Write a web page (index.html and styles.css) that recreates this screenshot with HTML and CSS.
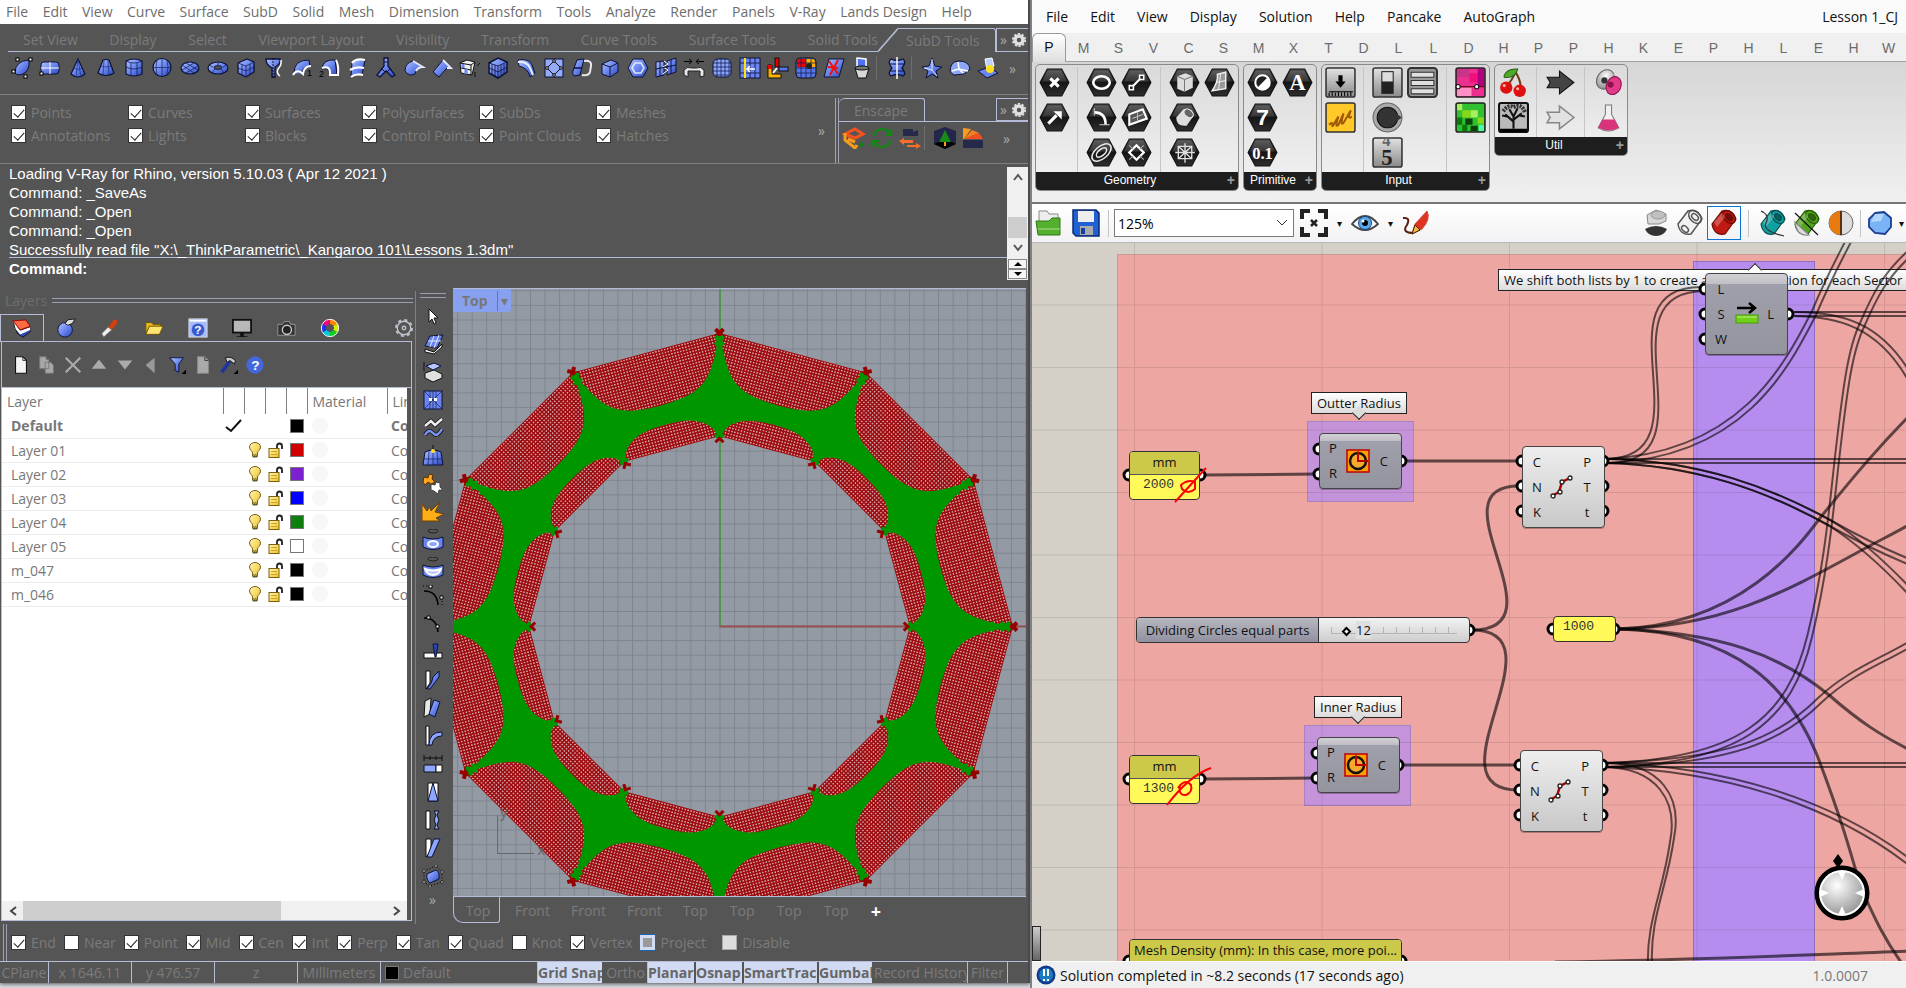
FILE: index.html
```html
<!DOCTYPE html>
<html lang="en">
<head>
  <meta charset="UTF-8" />
  <meta name="viewport" content="width=device-width, initial-scale=1" />
  <title>Lesson 1_CJ</title>
  <link rel="stylesheet" href="styles.css">
</head>
<body>
  <!-- shared gradients and symbols -->
  <svg class="defs" width="0" height="0" aria-hidden="true">
    <defs>
      <linearGradient id="blue" x1="0" y1="0" x2="1" y2="1"><stop offset="0" stop-color="#b4c4ff"/><stop offset=".5" stop-color="#6a86ee"/><stop offset="1" stop-color="#2c47b8"/></linearGradient>
      <linearGradient id="dark" x1="0" y1="0" x2="0" y2="1"><stop offset="0" stop-color="#4c4c4c"/><stop offset=".5" stop-color="#151515"/><stop offset="1" stop-color="#2e2e2e"/></linearGradient>
      <linearGradient id="steel" x1="0" y1="0" x2="0" y2="1"><stop offset="0" stop-color="#e2e2e2"/><stop offset="1" stop-color="#8a8a8a"/></linearGradient>
      <linearGradient id="gold" x1="0" y1="0" x2="1" y2="1"><stop offset="0" stop-color="#fff6b0"/><stop offset="1" stop-color="#f0c020"/></linearGradient>
      <radialGradient id="ball" cx=".4" cy=".35" r=".7"><stop offset="0" stop-color="#fff"/><stop offset="1" stop-color="#888"/></radialGradient>
      <pattern id="mesh" width="3" height="3" patternUnits="userSpaceOnUse" patternTransform="rotate(15)"><rect width="3" height="3" fill="#9c0c10"/><rect width="1.400" height="1.400" fill="#d8b0b2"/></pattern>
      <pattern id="grid" x="720" y="624" width="14.55" height="14.55" patternUnits="userSpaceOnUse"><path d="M.5 0V15M0 .5H15" stroke="#7f858e" fill="none"/></pattern>
    </defs>
    <symbol id="hex" viewBox="0 0 30 28"><path d="M8 1H22L29 14L22 27H8L1 14Z" fill="url(#dark)" stroke="#111"/><path d="M8.500 2.500H21.500L27 13H3Z" fill="#fff" opacity=".12"/></symbol>
    <symbol id="bulb" viewBox="0 0 14 17"><path d="M4.500 11C4.500 9 1.500 8 1.500 5a5.500 4.500 0 0 1 11 0c0 3-3 4-3 6v3.500h-5z" fill="url(#gold)" stroke="#806020"/><path d="M5 13h4M5 15h4" stroke="#555"/></symbol>
    <symbol id="lock" viewBox="0 0 16 17"><path d="M9 7V4q0-2.500 2.500-2.500T14 4v3" fill="none" stroke="#222" stroke-width="1.800"/><rect x="1" y="6.500" width="10" height="9" fill="url(#gold)" stroke="#776010"/><path d="M3 9.500h6M3 12.500h6" stroke="#c8a818"/></symbol>
    <symbol id="gear" viewBox="0 0 18 18"><circle cx="9" cy="9" r="4.500" fill="none" stroke="#e0e0e0" stroke-width="4"/><circle cx="9" cy="9" r="7" fill="none" stroke="#e0e0e0" stroke-width="2" stroke-dasharray="2.500 1.900"/></symbol>
    <symbol id="clock" viewBox="0 0 24 24"><rect x="1" y="1" width="22" height="22" fill="#ffa000" stroke="#c00000" stroke-width="1.500"/><circle cx="12" cy="12" r="8" fill="#f6a92a" stroke="#111" stroke-width="2.500"/><path d="M12 2.500V12H22" stroke="#b00" stroke-width="2" fill="none"/></symbol>
    <symbol id="divide" viewBox="0 0 24 24"><path d="M2 21L9 17L12 7L20 3" stroke="#a00" stroke-width="2.500" fill="none"/><g fill="#fff" stroke="#222" stroke-width="1.300"><circle cx="3" cy="21" r="2"/><circle cx="10" cy="17" r="2"/><circle cx="12" cy="7" r="2"/><circle cx="20" cy="3" r="2"/></g></symbol>
    <symbol id="tube" viewBox="0 0 28 28"><path d="M2 15L12 2Q22-1 26 10L15 25Q4 27 2 15Z"/><ellipse cx="19" cy="8" rx="7.500" ry="5" transform="rotate(45 19 8)"/><ellipse cx="19" cy="8" rx="4" ry="2.500" transform="rotate(45 19 8)" fill="#000" fill-opacity=".4"/><path d="M4 13L12 4L15 8L7 18Z" fill="#fff" fill-opacity=".25" stroke="none"/></symbol>
    <symbol id="tube-lines" viewBox="0 0 28 28"><path d="M2 15L12 2Q22-1 26 10L15 25Q4 27 2 15Z"/><ellipse cx="19" cy="8" rx="7.500" ry="5" transform="rotate(45 19 8)" fill="none"/><ellipse cx="19" cy="8" rx="4" ry="2.500" transform="rotate(45 19 8)" fill="none"/><ellipse cx="9" cy="20" rx="4" ry="2.500" transform="rotate(45 9 20)" fill="none"/></symbol>
    <symbol id="sheet" viewBox="0 0 22 22"><path d="M5 2h8l4 4v14H5z" stroke-width="1.200"/><path d="M13 2v4h4" fill="none" stroke="#333"/></symbol>
  </svg>

  <main class="desktop">
    <section class="rhino">
      <nav class="menu">
        <a href="#">File</a><a href="#">Edit</a><a href="#">View</a><a href="#">Curve</a><a href="#">Surface</a><a href="#">SubD</a><a href="#">Solid</a><a href="#">Mesh</a><a href="#">Dimension</a><a href="#">Transform</a><a href="#">Tools</a><a href="#">Analyze</a><a href="#">Render</a><a href="#">Panels</a><a href="#">V-Ray</a><a href="#">Lands Design</a><a href="#">Help</a>
      </nav>

      <div class="toolbars">
        <div class="tabstrip">
          <div class="tabs"><a href="#">Set View</a><a href="#">Display</a><a href="#">Select</a><a href="#">Viewport Layout</a><a href="#">Visibility</a><a href="#">Transform</a><a href="#">Curve Tools</a><a href="#">Surface Tools</a><a href="#">Solid Tools</a></div>
          <a class="tab-on" href="#"><svg width="20" height="24" viewBox="0 0 20 24"><path d="M0 23.500L20 .5" stroke="#b4bcd8" stroke-width="1.500"/></svg><span>SubD Tools</span></a>
          <div class="tab-end"><span>»</span><svg width="16" height="16"><use href="#gear"/></svg></div>
        </div>
        <div class="icons">
          <svg viewBox="0 0 22 22"><path d="M4 16Q4 4 18 3Q19 14 12 17Q6 19 4 16Z" fill="url(#blue)" stroke="#0c1238"/><g fill="#fff" stroke="#000"><rect x="5" y="1" width="3" height="3"/><rect x="18" y="1" width="3" height="3"/><rect x="1" y="13" width="3" height="3"/><rect x="13" y="18" width="3" height="3"/></g></svg>
          <svg viewBox="0 0 22 22"><rect x="2" y="5" width="18" height="12" rx="3" fill="url(#blue)" stroke="#0c1238"/><path d="M11 5v12M2 11h18" stroke="#fff"/><rect x="1" y="15" width="3" height="3" fill="#fff" stroke="#000"/></svg>
          <svg viewBox="0 0 22 22"><path d="M11 2L18 17Q11 23 4 17Z" fill="url(#blue)" stroke="#0c1238" stroke-width="1.200"/><path d="M11 2L9 20M11 2L14 20M7 11Q11 14 15 11" stroke="#1a2b78" fill="none" stroke-width=".7"/></svg>
          <svg viewBox="0 0 22 22"><path d="M8 3Q11 2 14 3L19 16Q11 21 3 16Z" fill="url(#blue)" stroke="#0c1238" stroke-width="1.200"/><path d="M6 9Q11 11 16 9M9 3L8 18M13 3L14 18" stroke="#1a2b78" fill="none" stroke-width=".7"/></svg>
          <svg viewBox="0 0 22 22"><path d="M3 4Q11 0 19 4V17Q11 21 3 17Z" fill="url(#blue)" stroke="#0c1238" stroke-width="1.200"/><path d="M3 4Q11 8 19 4M3 10Q11 14 19 10M8 6v13M14 6v13" stroke="#15205c" fill="none" stroke-width=".8"/></svg>
          <svg viewBox="0 0 22 22"><circle cx="11" cy="10.500" r="9" fill="url(#blue)" stroke="#0c1238" stroke-width="1.200"/><path d="M2 10.500H20M11 2V19M6 3Q4 10 6 18M16 3Q18 10 16 18" stroke="#15205c" fill="none" stroke-width=".7"/></svg>
          <svg viewBox="0 0 22 22"><ellipse cx="11" cy="11" rx="9" ry="6" fill="url(#blue)" stroke="#0c1238" stroke-width="1.200"/><path d="M3 8L15 16M7 6L19 13M3 13L15 6M7 16L19 9" stroke="#15205c" stroke-width=".8"/></svg>
          <svg viewBox="0 0 22 22"><ellipse cx="11" cy="11" rx="10" ry="6" fill="url(#blue)" stroke="#0c1238" stroke-width="1.200"/><ellipse cx="11" cy="10.500" rx="4" ry="1.800" fill="#555" stroke="#0c1238"/><path d="M2 8l4 2M11 5v3M20 8l-4 2M5 16l3-4M17 16l-3-4" stroke="#15205c" stroke-width=".8"/></svg>
          <svg viewBox="0 0 22 22"><path d="M3 6L12 2L19 5V15L11 20L3 16Z" fill="url(#blue)" stroke="#0c1238" stroke-width="1.300" stroke-linejoin="round"/><path d="M3 6L11 9L19 5M11 9V20M3 11L11 14L19 10M7 7.500V18M15 7V17" stroke="#15205c" fill="none" stroke-width=".8"/></svg>
          <svg viewBox="0 0 22 22"><path d="M3 2H17Q18 7 12 10V20H9V11Q3 8 3 2Z" fill="url(#blue)" stroke="#0c1238" stroke-width="1.300"/><path d="M18 3Q19 8 15 12Q13 16 17 19" fill="none" stroke="#fff" stroke-width="1.500"/><path d="M10 1V21" stroke="#111" stroke-dasharray="2 1"/></svg>
          <svg viewBox="0 0 22 22"><path d="M3 16Q3 3 18 3L19 10Q11 9 11 17" fill="url(#blue)" stroke="#0c1238"/><path d="M2 18Q6 11 12 17Q13 9 20 9" fill="none" stroke="#fff" stroke-width="2"/><text x="16" y="19" font-size="9">1</text></svg>
          <svg viewBox="0 0 22 22"><path d="M3 12Q4 2 16 3L18 18H11Q12 10 3 12Z" fill="url(#blue)" stroke="#0c1238"/><path d="M3 11Q12 8 11 18H19Q20 8 17 3" fill="none" stroke="#fff" stroke-width="2"/><text x="0" y="20" font-size="9">2</text></svg>
          <svg viewBox="0 0 22 22"><path d="M5 6Q9 1 18 3L15 18Q8 16 4 20Z" fill="url(#blue)" stroke="#0c1238"/><path d="M5 6Q9 1 18 3M3 13Q9 9 17 11M4 20Q9 16 16 18" fill="none" stroke="#fff" stroke-width="2.200"/></svg>
          <svg viewBox="0 0 22 22"><path d="M9 1H13V9L20 18L17 20L11 14L5 20L2 18L9 9Z" fill="url(#blue)" stroke="#0c1238" stroke-width="1.300"/><path d="M9 5h4M7 12l3 3M15 12l-3 3" stroke="#0c1238"/></svg>
          <svg viewBox="0 0 22 22"><path d="M2 14Q2 6 10 4L20 10Q13 11 12 17Q6 20 2 14Z" fill="url(#blue)" stroke="#0c1238"/><path d="M10 4L20 10Q15 10 13 14" fill="none" stroke="#e6ecff" stroke-width="1.800"/></svg>
          <svg viewBox="0 0 22 22"><path d="M2 15L12 3L20 11H16L8 20Z" fill="url(#blue)" stroke="#0c1238"/><path d="M12 3L20 11H16" fill="none" stroke="#e6ecff" stroke-width="1.800"/></svg>
          <svg viewBox="0 0 22 22"><path d="M1 6L8 3L16 5L13 18L2 16Z" fill="#eee" stroke="#111"/><path d="M1 6L12 8L16 5M12 8V18M2 11L12 13" stroke="#111" fill="none"/><path d="M4 7v4M7 12v5" stroke="#6a86ee" stroke-width="3"/><path d="M16 15V20M18 9L21 6" stroke="#111"/></svg>
          <svg viewBox="0 0 22 22"><path d="M2 6L11 1L20 5V15L11 21L2 16Z" fill="url(#blue)" stroke="#0c1238" stroke-width="1.500"/><path d="M2 6L11 9L20 5M11 9V21M2 11L11 15L20 10M5 7V18M8 8V19M14 8V19M17 7V17" stroke="#0c1238" fill="none" stroke-width=".8"/></svg>
          <svg viewBox="0 0 22 22"><path d="M3 3Q14 1 17 8L20 16L15 20Q13 11 4 9Z" fill="url(#blue)" stroke="#0c1238"/><path d="M3 5Q12 4 15 11L18 18" fill="none" stroke="#e6ecff" stroke-width="2"/></svg>
          <svg viewBox="0 0 22 22"><rect x="2" y="2" width="18" height="18" fill="#94a9f8" stroke="#0c1238"/><path d="M11 4L18 11L11 18L4 11Z" fill="none" stroke="#111"/><g fill="#fff" stroke="#000"><circle cx="11" cy="4" r="1.300"/><circle cx="18" cy="11" r="1.300"/><circle cx="11" cy="18" r="1.300"/><circle cx="4" cy="11" r="1.300"/></g></svg>
          <svg viewBox="0 0 22 22"><path d="M6 3L13 2L9 18L3 19Q1 17 2 14Z" fill="url(#blue)" stroke="#0c1238"/><path d="M3 11h8" stroke="#0c1238" stroke-width="1.500"/><path d="M13 4Q21 3 20 9L19 15Q18 19 11 18" fill="none" stroke="#e8e8e8" stroke-width="2"/></svg>
          <svg viewBox="0 0 22 22"><path d="M3 7L12 3L19 6V15L11 20L3 17Z" fill="url(#blue)" stroke="#0c1238"/><path d="M3 7L11 10L19 6M11 10V20" stroke="#0c1238" fill="none"/></svg>
          <svg viewBox="0 0 22 22"><path d="M6 2H16L21 11L16 20H6L1 11Z" fill="url(#blue)" stroke="#0c1238"/><path d="M8 6H14L17 11L14 16H8L5 11Z" fill="none" stroke="#dfe7ff" stroke-width="1.500"/></svg>
          <svg viewBox="0 0 22 22"><path d="M1 5L9 4V18L1 20ZM12 4L21 1V15L12 18Z" fill="url(#blue)" stroke="#0c1238"/><path d="M9 4L13 7L8 10L13 13L8 17" fill="none" stroke="#fff"/><path d="M1 12L21 8M5 5V19M16 3V17" stroke="#0c1238"/></svg>
          <svg viewBox="0 0 22 22"><path d="M1 4.500H9M13 4.500H21M6 2l3 2.500L6 7M16 2l-3 2.500L16 7" stroke="#000" fill="none"/><path d="M1 13Q4 9 9 11H13Q18 9 21 13V19L17 20V14H5V20L1 18Z" fill="#e8e8e8" stroke="#222"/></svg>
          <svg viewBox="0 0 22 22"><rect x="2" y="2" width="18" height="18" rx="5" fill="#8ea6f8" stroke="#0c1238"/><path d="M6 2V20M10 2V20M14 2V20M18 4V18M2 6H20M2 10H20M2 14H20M4 18H18" stroke="#15205c" stroke-width=".8"/></svg>
          <svg viewBox="0 0 22 22"><rect x="1" y="1" width="20" height="20" fill="#6a86ee" stroke="#0c1238"/><path d="M11 1V21M16 1V21M1 6H21M1 16H21" stroke="#15205c"/><path d="M6 1V21" stroke="#ffe500" stroke-width="2"/><path d="M8 12H16M11 9L8 12L11 15" stroke="#fff" stroke-width="1.500" fill="none"/></svg>
          <svg viewBox="0 0 22 22"><rect x="8" y="1" width="4" height="9" fill="#e00000" stroke="#111"/><rect x="12" y="10" width="9" height="4" fill="#5676e4" stroke="#111"/><path d="M1 8H5V17H14V21H1Z" fill="#ffb000" stroke="#111"/><path d="M1 8h4v4H1z" fill="#e00"/><path d="M10 11L6 16" stroke="#fff" stroke-width="2"/></svg>
          <svg viewBox="0 0 22 22"><rect x="1" y="1" width="20" height="20" rx="4" fill="#5676e4" stroke="#111"/><path d="M2 5Q2 2 5 2H11V10H2Z" fill="#e00"/><path d="M11 2H17Q20 2 20 5V10H11Z" fill="#ffb000"/><path d="M6 1V21M11 1V21M16 1V21M1 6H21M1 11H21M1 16H21" stroke="#15205c" stroke-width=".8"/><circle cx="14" cy="9" r="3" fill="#222"/></svg>
          <svg viewBox="0 0 22 22"><path d="M6 2H21L16 20H1Z" fill="url(#blue)" stroke="#0c1238"/><path d="M6 4L15 17M15 3L7 18M5 10L15 11" stroke="#f01010" stroke-width="2"/></svg>
          <svg viewBox="0 0 22 22"><path d="M6 1L15 2V11H6Z" fill="#4d70f0" stroke="#fff" stroke-width="1.500"/><path d="M4 11H18L15 21H7Z" fill="#d8d8d8" stroke="#111"/><ellipse cx="11" cy="11" rx="7" ry="2" fill="#777" stroke="#111"/></svg>
          <i class="sep"></i>
          <svg viewBox="0 0 22 22"><path d="M5 2Q11 5 17 2Q21 5 16 11Q21 17 17 19Q11 16 5 19Q1 17 6 11Q1 5 5 2Z" fill="url(#blue)" stroke="#0c1238" stroke-width="1.300"/><path d="M4 7H18M4 14H18" stroke="#0c1238"/><path d="M11 0V22" stroke="#fff" stroke-width="1.500"/></svg>
          <i class="sep"></i>
          <svg viewBox="0 0 22 22"><path d="M11 1L14 9L21 10L15 14L17 21L11 17L5 21L7 14L1 10L8 9Z" fill="url(#blue)" stroke="#0c1238"/><path d="M11 2V13L16 19M11 13L3 11" stroke="#dfe7ff" fill="none"/></svg>
          <svg viewBox="0 0 22 22"><path d="M1 15Q1 4 10 4Q20 4 21 12L15 17L5 18Z" fill="#8ea6f6" stroke="#0c1238"/><path d="M3 14L10 12L19 14M10 12L9 5M10 12L14 16" stroke="#fff" stroke-width="1.500" fill="none"/></svg>
          <svg viewBox="0 0 22 22"><path d="M1 14L12 10L21 16L10 21Z" fill="#6a86ee" stroke="#0c1238"/><path d="M8 2L15 1L17 9L10 13Z" fill="#bcd0ff" stroke="#fff"/><circle cx="13" cy="12" r="4" fill="#ffe020"/></svg>
          <span class="more">»</span>
        </div>
      </div>

      <div class="filters">
        <form class="filter-grid">
          <label><input type="checkbox" checked>Points</label>
          <label><input type="checkbox" checked>Curves</label>
          <label><input type="checkbox" checked>Surfaces</label>
          <label><input type="checkbox" checked>Polysurfaces</label>
          <label><input type="checkbox" checked>SubDs</label>
          <label><input type="checkbox" checked>Meshes</label>
          <label><input type="checkbox" checked>Annotations</label>
          <label><input type="checkbox" checked>Lights</label>
          <label><input type="checkbox" checked>Blocks</label>
          <label><input type="checkbox" checked>Control Points</label>
          <label><input type="checkbox" checked>Point Clouds</label>
          <label><input type="checkbox" checked>Hatches</label>
        </form>
        <span class="more">»</span>
        <div class="enscape">
          <div class="enscape-tabs"><a href="#">Enscape</a><div class="tab-end"><span>»</span><svg width="16" height="16"><use href="#gear"/></svg></div></div>
          <div class="enscape-icons">
            <svg viewBox="0 0 22 22"><path d="M2 7L12 2L20 7L12 11Z" fill="none" stroke="#f4511e" stroke-width="3"/><path d="M2 6V13L12 21L14 18M5 12L12 15" fill="none" stroke="#f99b1c" stroke-width="3"/><path d="M16 14L22 18L16 21Z" fill="#108010"/></svg>
            <svg viewBox="0 0 22 22"><path d="M2 9Q5 2 11 2Q16 2 19 7M20 2V8H14M20 13Q17 20 11 20Q6 20 3 15M2 20V14H8" fill="none" stroke="#108a10" stroke-width="2.200"/></svg>
            <svg viewBox="0 0 22 22"><path d="M4 2H14V5L19 3V9H4Z" fill="#262a4a"/><path d="M0 14L5 11V13H14V16H5V18ZM22 19L17 16V18H8V20H17V22Z" fill="#f4702a"/></svg>
            <i class="sep"></i>
            <svg viewBox="0 0 22 22"><path d="M0 4L11 0L22 4V17L11 22L0 17Z" fill="#22264a"/><path d="M0 17L11 12L22 17L11 22Z" fill="#000"/><path d="M11 3L17 15H5Z" fill="#188a18"/><path d="M11 15V19" stroke="#f99b1c" stroke-width="2"/></svg>
            <svg viewBox="0 0 22 22"><rect x="1" y="13" width="20" height="8" rx="1" fill="#262a4a"/><path d="M1 1L9 2L2 12H1Z" fill="#f99b1c"/><path d="M2 12L10 3L17 6Z" fill="#f47f20"/><path d="M2 12L17 6L21 12Z" fill="#f4511e"/></svg>
            <span class="more">»</span>
          </div>
        </div>
      </div>

      <div class="command">
        <div class="history">
          <p>Loading V-Ray for Rhino, version 5.10.03 ( Apr 12 2021 )</p>
          <p>Command: _SaveAs</p>
          <p>Command: _Open</p>
          <p>Command: _Open</p>
          <p>Successfully read file "X:\_ThinkParametric\_Kangaroo 101\Lessons 1.3dm"</p>
        </div>
        <div class="vscroll"><button aria-label="Scroll up"><svg width="12" height="8"><path d="M2 7L6 2L10 7" stroke="#555" stroke-width="2" fill="none"/></svg></button><i></i><button aria-label="Scroll down"><svg width="12" height="8"><path d="M2 1L6 6L10 1" stroke="#555" stroke-width="2" fill="none"/></svg></button></div>
        <label class="prompt" for="cmd">Command:</label>
        <input id="cmd" type="text">
        <div class="spin"><button aria-label="Previous"><svg width="8" height="4"><path d="M0 4L4 0L8 4"/></svg></button><button aria-label="Next"><svg width="8" height="4"><path d="M0 0L4 4L8 0"/></svg></button></div>
      </div>

      <div class="work">
        <aside class="layers">
          <h2><span>Layers</span></h2>
          <div class="panel-tabs">
            <a class="on" href="#"><svg viewBox="0 0 22 22"><path d="M2 6L6 16L12 20L20 14V9L10 12Z" fill="#2a4cc0" stroke="#111"/><path d="M2 3L9 13L20 9V12L9 17L4 11Z" fill="#fff"/><path d="M1 2L15 1L20 8L9 12Z" fill="#ff6a40" stroke="#900"/></svg></a>
            <a href="#"><svg viewBox="0 0 22 22"><circle cx="10" cy="13" r="8" fill="url(#blue)" stroke="#0c1238"/><path d="M10 6L13 2L21 1L18 6L13 8Z" fill="#ddd" stroke="#111"/></svg></a>
            <a href="#"><svg viewBox="0 0 22 22"><path d="M4 21L2 17L9 10L13 13Z" fill="#eee" stroke="#777"/><path d="M9 10L15 2H19V6L13 13Z" fill="#d04010"/></svg></a>
            <a href="#"><svg viewBox="0 0 22 22"><path d="M2 5H8L10 7H18V10H6L2 17Z" fill="#e8b820" stroke="#6a5000"/><path d="M2 18L6 9H21L17 18Z" fill="#ffe470" stroke="#6a5000"/></svg></a>
            <a href="#"><svg viewBox="0 0 22 22"><rect x="1" y="1" width="20" height="20" fill="#a8bcfa" stroke="#ddd"/><path d="M2 3H20" stroke="#fff" stroke-width="2"/><circle cx="11" cy="13" r="7" fill="#3a5ad0"/><text x="7" y="18" font-size="13" font-weight="bold" fill="#fff">?</text></svg></a>
            <a href="#"><svg viewBox="0 0 22 22"><rect x="1" y="2" width="20" height="14" fill="#b8b8b8" stroke="#111" stroke-width="2"/><path d="M9 16H13V20H17V21H5V20H9Z" fill="#111"/></svg></a>
            <a href="#"><svg viewBox="0 0 22 22"><path d="M2 7H7L9 4H15L16 7H21V19H2Z" fill="#333" stroke="#999"/><circle cx="12" cy="13" r="5" fill="#222" stroke="#ccc" stroke-width="1.500"/></svg></a>
            <a href="#"><svg viewBox="0 0 22 22"><g fill="none" stroke-width="5"><path d="M11 4A7 7 0 0 1 17 7.500" stroke="#f80"/><path d="M17 7.500A7 7 0 0 1 17 14.500" stroke="#d8f000"/><path d="M17 14.500A7 7 0 0 1 11 18" stroke="#10d020"/><path d="M11 18A7 7 0 0 1 5 14.500" stroke="#00c8e0"/><path d="M5 14.500A7 7 0 0 1 5 7.500" stroke="#2030f0"/><path d="M5 7.500A7 7 0 0 1 11 4" stroke="#f00080"/></g><circle cx="11" cy="11" r="9.500" fill="none" stroke="#fff"/></svg></a>
            <svg class="panel-gear" viewBox="0 0 20 20"><circle cx="10" cy="10" r="7.500" fill="none" stroke="#c0c6d0" stroke-width="1.500"/><circle cx="10" cy="10" r="9" fill="none" stroke="#c0c6d0" stroke-width="2" stroke-dasharray="3.500 3.570"/><circle cx="10" cy="10" r="2" fill="none" stroke="#c0c6d0" stroke-width="1.500"/></svg>
          </div>
          <div class="panel-body">
            <div class="panel-tools">
              <svg viewBox="0 0 22 22" fill="#f4f4f4" stroke="#111"><use href="#sheet"/></svg>
              <svg viewBox="0 0 22 22"><path d="M3 2h7v3h3v10H3zM9 8h6l3 3v9H9z" fill="#a8a8a8" stroke="#777"/></svg>
              <svg viewBox="0 0 22 22"><path d="M3 3L19 19M19 3L3 19" stroke="#aaa" stroke-width="2.500"/></svg>
              <svg viewBox="0 0 22 22"><path d="M11 5L19 15H3Z" fill="#aaa"/></svg>
              <svg viewBox="0 0 22 22"><path d="M11 16L19 6H3Z" fill="#aaa"/></svg>
              <svg viewBox="0 0 22 22"><path d="M5 11L15 3V20Z" fill="#999"/></svg>
              <svg viewBox="0 0 22 22"><path d="M3 3H18L13 10V19L9 17V10Z" fill="url(#blue)" stroke="#0c1238"/><path d="M21 16v5h-5z"/></svg>
              <svg viewBox="0 0 22 22" fill="#aaa" stroke="#888"><use href="#sheet"/></svg>
              <svg viewBox="0 0 22 22"><path d="M12 7L3 19" stroke="#1c35a0" stroke-width="4"/><path d="M7 3Q13 1 18 6L17 10L12 6L9 8Z" fill="#ccc" stroke="#111"/><path d="M21 16v5h-5z"/></svg>
              <svg viewBox="0 0 22 22"><circle cx="11" cy="11" r="9.500" fill="#4468dc"/><text x="7" y="17" font-size="15" font-weight="bold" fill="#fff">?</text></svg>
            </div>
            <div class="list">
            <table>
              <thead><tr><th class="name">Layer</th><th></th><th></th><th></th><th></th><th class="mat">Material</th><th class="lin">Lin</th></tr></thead>
              <tbody>
                <tr class="current"><td>Default</td><td><svg width="17" height="14"><path d="M1 8L6 12L16 1" fill="none" stroke="#111" stroke-width="2"/></svg></td><td></td><td></td><td><i class="sw black"></i></td><td><i class="dot"></i></td><td>Co</td></tr>
                <tr><td>Layer 01</td><td></td><td><svg width="14" height="17"><use href="#bulb"/></svg></td><td><svg width="16" height="17"><use href="#lock"/></svg></td><td><i class="sw red"></i></td><td><i class="dot"></i></td><td>Co</td></tr>
                <tr><td>Layer 02</td><td></td><td><svg width="14" height="17"><use href="#bulb"/></svg></td><td><svg width="16" height="17"><use href="#lock"/></svg></td><td><i class="sw purple"></i></td><td><i class="dot"></i></td><td>Co</td></tr>
                <tr><td>Layer 03</td><td></td><td><svg width="14" height="17"><use href="#bulb"/></svg></td><td><svg width="16" height="17"><use href="#lock"/></svg></td><td><i class="sw blue"></i></td><td><i class="dot"></i></td><td>Co</td></tr>
                <tr><td>Layer 04</td><td></td><td><svg width="14" height="17"><use href="#bulb"/></svg></td><td><svg width="16" height="17"><use href="#lock"/></svg></td><td><i class="sw green"></i></td><td><i class="dot"></i></td><td>Co</td></tr>
                <tr><td>Layer 05</td><td></td><td><svg width="14" height="17"><use href="#bulb"/></svg></td><td><svg width="16" height="17"><use href="#lock"/></svg></td><td><i class="sw"></i></td><td><i class="dot"></i></td><td>Co</td></tr>
                <tr><td>m_047</td><td></td><td><svg width="14" height="17"><use href="#bulb"/></svg></td><td><svg width="16" height="17"><use href="#lock"/></svg></td><td><i class="sw black"></i></td><td><i class="dot"></i></td><td>Co</td></tr>
                <tr><td>m_046</td><td></td><td><svg width="14" height="17"><use href="#bulb"/></svg></td><td><svg width="16" height="17"><use href="#lock"/></svg></td><td><i class="sw black"></i></td><td><i class="dot"></i></td><td>Co</td></tr>
              </tbody>
            </table>
            <div class="hscroll"><button aria-label="Scroll left"><svg width="8" height="12"><path d="M7 2L2 6L7 10" stroke="#444" stroke-width="2" fill="none"/></svg></button><div><i></i></div><button aria-label="Scroll right"><svg width="8" height="12"><path d="M1 2L6 6L1 10" stroke="#444" stroke-width="2" fill="none"/></svg></button></div>
            </div>
          </div>
        </aside>

        <div class="side-tools">
          <svg viewBox="0 0 22 22"><path d="M7 4V17L10 14L12 19L14 18L12 13H16Z" fill="#fff" stroke="#111"/></svg>
          <svg viewBox="0 0 22 22"><path d="M3 16L12 19L20 11V14L12 21L3 19Z" fill="#eee" stroke="#111"/><path d="M8 3L21 2L15 15L3 13Z" fill="#6a86ee" stroke="#0c1238"/><path d="M12 3L8 14M17 2L12 15M6 8L19 8" stroke="#dfe7ff"/></svg>
          <svg viewBox="0 0 22 22"><path d="M3 12L12 9L20 13V17L11 21L3 17Z" fill="#e0e0e0" stroke="#111"/><path d="M4 5L12 2L19 5L11 9Z" fill="#b8c8ff" stroke="#0c1238"/><path d="M2 1V10" stroke="#111"/></svg>
          <svg viewBox="0 0 22 22"><rect x="2" y="2" width="18" height="18" fill="#6a86ee" stroke="#0c1238"/><path d="M2 2L11 11L20 2M2 20L11 11L20 20M11 2V20M8 2V20M14 2V20" stroke="#15205c" stroke-width=".7" fill="none"/><path d="M7 9h3v3H7zM12 9h3v3h-3z" fill="#fff"/></svg>
          <svg viewBox="0 0 22 22" fill="none"><path d="M3 9L9 4L13 8L20 2" stroke="#111" stroke-width="4"/><path d="M3 9L9 4L13 8L20 2" stroke="#eee" stroke-width="2.500"/><path d="M3 18Q7 11 11 16T20 12" stroke="#111" stroke-width="4"/><path d="M3 18Q7 11 11 16T20 12" stroke="#7a94f4" stroke-width="2.500"/></svg>
          <svg viewBox="0 0 22 22"><path d="M3 7Q11 3 19 7L21 20H1Z" fill="url(#blue)" stroke="#0c1238"/><path d="M2 14H20M7 6L6 20M15 6L16 20M11 5V20" stroke="#15205c" stroke-width=".7"/><path d="M11 0V7" stroke="#111"/><circle cx="11" cy="6" r="2" fill="#ffe020"/></svg>
          <svg viewBox="0 0 22 22"><path d="M2 4L6 5L7 1L11 2L10 6L13 9L9 11L6 9L3 12L1 9Z" fill="#ffa51e" stroke="#5a3000"/><path d="M9 11L13 12L14 9L18 10L18 14L21 17L17 17L16 21L12 18L9 17Z" fill="#fff" stroke="#444"/></svg>
          <svg viewBox="0 0 22 22"><path d="M0 3L5 10L8 6L9 10L18 1L13 11L22 13L14 17L18 20H0Z" fill="#ffae18" stroke="#704000"/></svg>
          <svg viewBox="0 0 22 22"><ellipse cx="11" cy="2" rx="5" ry="2" fill="none" stroke="#222"/><path d="M1 8Q11 12 21 8V18Q11 23 1 18Z" fill="#6a86ee" stroke="#0c1238"/><ellipse cx="11" cy="15" rx="5" ry="3" fill="#8ea6ff" stroke="#fff" stroke-width="2"/></svg>
          <svg viewBox="0 0 22 22"><ellipse cx="11" cy="2" rx="5" ry="2" fill="none" stroke="#222"/><path d="M1 8Q11 12 21 8V18Q11 23 1 18Z" fill="#6a86ee" stroke="#0c1238"/><path d="M3 12Q11 15 19 12Q17 18 11 18T3 12Z" fill="#b8c8ff" stroke="#fff" stroke-width="2"/></svg>
          <svg viewBox="0 0 22 22"><path d="M2 6Q15 6 16 20" fill="none" stroke="#000" stroke-width="1.500"/><path d="M1 1H9M20 13V21" stroke="#000" stroke-dasharray="1 2"/><path d="M7 0h3v3H7zM18 11h3v3h-3z" fill="#fff" stroke="#000"/></svg>
          <svg viewBox="0 0 22 22"><path d="M2 5Q15 5 16 19" fill="none" stroke="#000" stroke-width="1.500"/><path d="M5 3h3v3H5zM14 12h3v3h-3z" fill="#fff" stroke="#000"/></svg>
          <svg viewBox="0 0 22 22"><rect x="2" y="12" width="18" height="5" fill="#fff" stroke="#111"/><path d="M11 3H16L14 16H13Z" fill="#2748b8" stroke="#0c1238"/></svg>
          <svg viewBox="0 0 22 22"><path d="M4 2H8V14L4 20Z" fill="#fff" stroke="#111"/><path d="M17 2V8L8 20H5Q11 13 11 8Z" fill="url(#blue)" stroke="#0c1238"/></svg>
          <svg viewBox="0 0 22 22"><path d="M3 4L9 1L8 17L2 20Z" fill="#e8e8e8" stroke="#111"/><path d="M12 3L18 5L13 20L7 17Z" fill="url(#blue)" stroke="#0c1238"/></svg>
          <svg viewBox="0 0 22 22"><path d="M4 1H7V20H4Z" fill="#fff" stroke="#111"/><path d="M7 20Q7 7 20 7V11Q11 11 10 20Z" fill="#8ea6ff" stroke="#0c1238"/></svg>
          <svg viewBox="0 0 22 22"><path d="M2 2V8M20 2V8M2 5H20M8 3V7M14 3V7" stroke="#111"/><path d="M2 12H14V19H2Z" fill="#8ea6ff" stroke="#111"/><path d="M14 12H20V19H14Z" fill="#fff" stroke="#111"/></svg>
          <svg viewBox="0 0 22 22"><path d="M6 2H16V20H6Z" fill="#fff" stroke="#111"/><path d="M11 2L16 20H6Z" fill="#8ea6ff" stroke="#0c1238"/></svg>
          <svg viewBox="0 0 22 22"><path d="M4 2H8V20H4Z" fill="#fff" stroke="#111"/><path d="M12 2H17L15 6L17 11L15 16L17 20H12L14 16L12 11L14 6Z" fill="#8ea6ff" stroke="#111"/></svg>
          <svg viewBox="0 0 22 22"><path d="M4 2H9V14L4 20Z" fill="#fff" stroke="#111"/><path d="M12 2H18L10 20H5Z" fill="#8ea6ff" stroke="#0c1238"/></svg>
          <svg viewBox="0 0 22 22"><path d="M5 9L14 5Q18 7 17 14L8 18Q4 15 5 9Z" fill="url(#blue)" stroke="#0c1238"/><path d="M2 6L14 1L20 7V17L8 21L2 17Z" fill="none" stroke="#000" stroke-dasharray="1 2"/><path d="M1 5h2v2H1zM13 0h2v2h-2zM19 6h2v2h-2zM7 20h2v2H7zM1 16h2v2H1zM19 16h2v2h-2z" fill="#fff" stroke="#000" stroke-width=".6"/></svg>
          <span class="more">»</span>
        </div>

        <div class="view">
          <div class="viewport">
            <svg class="scene" viewBox="453 288 574 606" preserveAspectRatio="xMidYMid slice">
              <defs>
                <g id="sector">
                  <path d="M0-293L146.500-253.700L95-164.500L0-190Z" fill="url(#mesh)"/>
                  <path d="M0-293L3-275C6-262 9-253 13-246.700C22-232 38-226 59-220C80.300-214.700 97-212 112-220C118.700-223.600 125.800-229.800 135-239.600L146.500-253.700L95-164.500C95.400-173.500 92.100-183.600 79.500-192C72-197 64.300-199.200 54-202C44-204.600 36-206.600 27-206C12-205 4-198 0-190Z" fill="#009600" stroke="#009600"/>
                </g>
                <g id="marks" fill="none" stroke-width="4">
                  <path d="M-4-297L4-289M4-297L-4-289" stroke="#980000"/>
                  <path d="M-4-192L4-184M4-192L-4-184" stroke="#980000" stroke-width="3"/>
                  <path d="M-4-290L4-281M4-290L-4-281M-4-274L4-266M4-274L-4-266M0-290V-260M-4-197L4-189M4-197L-4-189" stroke="#009600"/>
                </g>
              </defs>
              <rect x="453" y="288" width="574" height="606" fill="#939aa3"/>
              <rect x="453" y="288" width="574" height="606" fill="url(#grid)"/>
              <path d="M720.500 288V625" stroke="#4d964d" stroke-width="2"/>
              <path d="M720 625H1027" stroke="#964d50" stroke-width="2"/>
              <g transform="translate(720 625)">
                <use href="#sector"/><use href="#sector" transform="rotate(30)"/><use href="#sector" transform="rotate(60)"/><use href="#sector" transform="rotate(90)"/><use href="#sector" transform="rotate(120)"/><use href="#sector" transform="rotate(150)"/><use href="#sector" transform="rotate(180)"/><use href="#sector" transform="rotate(210)"/><use href="#sector" transform="rotate(240)"/><use href="#sector" transform="rotate(270)"/><use href="#sector" transform="rotate(300)"/><use href="#sector" transform="rotate(330)"/>
                <use href="#marks"/><use href="#marks" transform="rotate(30)"/><use href="#marks" transform="rotate(60)"/><use href="#marks" transform="rotate(90)"/><use href="#marks" transform="rotate(120)"/><use href="#marks" transform="rotate(150)"/><use href="#marks" transform="rotate(180)"/><use href="#marks" transform="rotate(210)"/><use href="#marks" transform="rotate(240)"/><use href="#marks" transform="rotate(270)"/><use href="#marks" transform="rotate(300)"/><use href="#marks" transform="rotate(330)"/>
              </g>
              <path d="M498.500 814V851.500H535" fill="none" stroke="#666"/>
              <text x="501" y="815" class="axis">y</text><text x="538" y="853" class="axis">x</text>
            </svg>
            <button class="view-title"><b>Top</b><i>▾</i></button>
          </div>
          <nav class="view-tabs"><a class="on" href="#">Top</a><a href="#">Front</a><a href="#">Front</a><a href="#">Front</a><a href="#">Top</a><a href="#">Top</a><a href="#">Top</a><a href="#">Top</a><button aria-label="New viewport">+</button></nav>
        </div>
      </div>

      <form class="osnap">
        <label><input type="checkbox" checked>End</label>
        <label><input type="checkbox">Near</label>
        <label><input type="checkbox" checked>Point</label>
        <label><input type="checkbox" checked>Mid</label>
        <label><input type="checkbox" checked>Cen</label>
        <label><input type="checkbox" checked>Int</label>
        <label><input type="checkbox" checked>Perp</label>
        <label><input type="checkbox" checked>Tan</label>
        <label><input type="checkbox" checked>Quad</label>
        <label><input type="checkbox">Knot</label>
        <label><input type="checkbox" checked>Vertex</label>
        <label class="project"><input type="checkbox">Project</label>
        <label class="disable"><input type="checkbox">Disable</label>
      </form>

      <footer class="status">
        <span class="c1">CPlane</span><span class="c2">x 1646.11</span><span class="c2">y 476.57</span><span class="c2">z</span><span class="c2">Millimeters</span><span class="c3"><i class="sw black"></i>Default</span>
        <button class="on s1">Grid Snap</button><button class="s2">Ortho</button><button class="on s3">Planar</button><button class="on s3">Osnap</button><button class="on s4">SmartTrack</button><button class="on s5">Gumball</button><button class="s6">Record History</button><button class="s7">Filter</button>
      </footer>
    </section>

    <section class="gh">
      <nav class="gh-menu"><a href="#">File</a><a href="#">Edit</a><a href="#">View</a><a href="#">Display</a><a href="#">Solution</a><a href="#">Help</a><a href="#">Pancake</a><a href="#">AutoGraph</a><span>Lesson 1_CJ</span></nav>
      <nav class="gh-tabs"><a class="on" href="#">P</a><a href="#">M</a><a href="#">S</a><a href="#">V</a><a href="#">C</a><a href="#">S</a><a href="#">M</a><a href="#">X</a><a href="#">T</a><a href="#">D</a><a href="#">L</a><a href="#">L</a><a href="#">D</a><a href="#">H</a><a href="#">P</a><a href="#">P</a><a href="#">H</a><a href="#">K</a><a href="#">E</a><a href="#">P</a><a href="#">H</a><a href="#">L</a><a href="#">E</a><a href="#">H</a><a href="#">W</a></nav>

      <div class="ribbon">
        <div class="group">
          <div class="cells">
            <div class="col">
              <svg viewBox="0 0 30 28"><use href="#hex"/><path d="M11 10L19 18M19 10L11 18" stroke="#fff" stroke-width="3"/></svg>
              <svg viewBox="0 0 30 28"><use href="#hex"/><path d="M9 20L17 12" stroke="#fff" stroke-width="3"/><path d="M14 8H22V16Z" fill="#fff"/></svg>
            </div>
            <div class="col two">
              <svg viewBox="0 0 30 28"><use href="#hex"/><ellipse cx="15" cy="14" rx="8" ry="6" fill="none" stroke="#fff" stroke-width="2.500"/></svg>
              <svg viewBox="0 0 30 28"><use href="#hex"/><path d="M10 19L20 9" stroke="#fff" stroke-width="2"/><path d="M8 17h4v4H8zM18 7h4v4h-4z" fill="#222" stroke="#fff" stroke-width="1.500"/></svg>
              <svg viewBox="0 0 30 28"><use href="#hex"/><path d="M8 9Q19 9 19 21" fill="none" stroke="#fff" stroke-width="2.500"/><path d="M13 21H23M8 5V12" stroke="#ccc"/></svg>
              <svg viewBox="0 0 30 28"><use href="#hex"/><path d="M8 11L21 6L25 15L8 21Z" fill="#555" stroke="#fff" stroke-width="2"/><path d="M11 15L21 11M16 9V18" fill="none" stroke="#bbb"/></svg>
              <svg viewBox="0 0 30 28"><use href="#hex"/><g fill="none" stroke="#e8e8e8" stroke-width="1.500" transform="rotate(-40 15 14)"><ellipse cx="15" cy="14" rx="11" ry="6"/><ellipse cx="15" cy="14" rx="6" ry="3"/></g></svg>
              <svg viewBox="0 0 30 28"><use href="#hex"/><path d="M15 7L22 14L15 21L8 14Z" fill="none" stroke="#fff" stroke-width="2.200"/><path d="M8 7l4 4M22 7l-4 4M8 21l4-4M22 21l-4-4" stroke="#aaa"/></svg>
            </div>
            <div class="col two">
              <svg viewBox="0 0 30 28"><use href="#hex"/><path d="M8 8L16 5L23 8V19L15 23L8 20Z" fill="#ddd"/><path d="M8 8L15 11L23 8M15 11V23" stroke="#777" fill="none"/></svg>
              <svg viewBox="0 0 30 28"><use href="#hex"/><path d="M13 6L21 4V20L8 22Q14 13 13 6Z" fill="#999" stroke="#eee" stroke-width="1.500"/><path d="M12 14L21 12M16 6L14 21" stroke="#eee"/></svg>
              <svg viewBox="0 0 30 28"><use href="#hex"/><path d="M7 14L14 6Q22 4 24 12L17 22Q7 23 7 14Z" fill="#ddd"/><ellipse cx="19" cy="10" rx="5" ry="3.500" transform="rotate(40 19 10)" fill="#666" stroke="#eee"/></svg>
              <i></i>
              <svg viewBox="0 0 30 28"><use href="#hex"/><path d="M9 8H22V20H9ZM15.500 5V24M6 14H25M9 8L22 20M22 8L9 20" fill="none" stroke="#e0e0e0" stroke-width="1.300"/></svg>
            </div>
          </div>
          <footer>Geometry<b>+</b></footer>
        </div>
        <div class="group">
          <div class="cells">
            <div class="col two">
              <svg viewBox="0 0 30 28"><use href="#hex"/><circle cx="15" cy="14" r="7" fill="#222" stroke="#fff" stroke-width="2"/><path d="M20 9A7 7 0 0 1 10 19Z" fill="#fff"/></svg>
              <svg viewBox="0 0 30 28"><use href="#hex"/><text x="7" y="21" class="glyph">A</text></svg>
              <svg viewBox="0 0 30 28"><use href="#hex"/><text x="9" y="21" class="glyph sans">7</text></svg>
              <i></i>
              <svg viewBox="0 0 30 28"><use href="#hex"/><text x="5" y="20" class="glyph small">0.1</text></svg>
            </div>
          </div>
          <footer>Primitive<b>+</b></footer>
        </div>
        <div class="group">
          <div class="cells">
            <div class="col">
              <svg viewBox="0 0 30 30"><rect x="1" y="1" width="28" height="28" rx="2" fill="url(#steel)" stroke="#333" stroke-width="1.500"/><path d="M13 8H17V14H20L15 20L10 14H13Z"/><path d="M4 25V28M7 24V28M10 25V28M13 24V28M16 25V28M19 24V28M22 25V28M25 24V28M4 24H27"  stroke="#000"/></svg>
              <svg viewBox="0 0 30 30"><rect x="1" y="1" width="28" height="28" rx="2" fill="#ffc928" stroke="#333" stroke-width="1.500"/><path d="M4 22Q8 18 7 24L13 14Q9 26 13 22L18 11Q14 24 18 20L25 8Q21 18 26 14" fill="none" stroke="#a35a08" stroke-width="2"/></svg>
            </div>
            <div class="col two">
              <svg viewBox="0 0 30 30"><rect x="1" y="1" width="28" height="28" rx="2" fill="url(#steel)" stroke="#333" stroke-width="1.500"/><rect x="9" y="4" width="12" height="22" fill="#222"/><rect x="10" y="5" width="10" height="9" fill="#ddd"/></svg>
              <svg viewBox="0 0 30 30"><rect x="1" y="1" width="28" height="28" rx="3" fill="#999" stroke="#333" stroke-width="2"/><path d="M4 5h22v5H4zM4 13h22v5H4zM4 21h22v5H4z" fill="#e0e0e0" stroke="#333"/></svg>
              <svg viewBox="0 0 30 30"><circle cx="15" cy="15" r="14" fill="#aaa" stroke="#666"/><circle cx="15" cy="15" r="10" fill="#333" stroke="#111"/><path d="M23 11L29 15L23 19" fill="#333"/></svg>
              <i></i>
              <svg viewBox="0 0 30 30"><rect x="1" y="1" width="28" height="28" rx="2" fill="url(#steel)" stroke="#333" stroke-width="1.500"/><text x="10" y="9" class="glyph small dim">4</text><text x="9" y="27" class="glyph digit">5</text></svg>
            </div>
            <div class="col">
              <svg viewBox="0 0 30 30"><rect x="1" y="1" width="28" height="28" rx="2" fill="#ee2f92" stroke="#222" stroke-width="1.500"/><path d="M2 2h12v8H2z" fill="#c83488"/><path d="M14 6h10v9H14z" fill="#f0107a"/><path d="M22 2h6v17h-6z" fill="#b00080"/><path d="M2 20h14v8H2z" fill="#ff8fc4"/><path d="M2 19H28" stroke="#611"/><circle cx="3" cy="19" r="2" fill="#fff" stroke="#111"/><circle cx="21" cy="19" r="2" fill="#fff" stroke="#111"/></svg>
              <svg viewBox="0 0 30 30"><rect x="1" y="1" width="28" height="28" rx="2" fill="#30c030" stroke="#222" stroke-width="1.500"/><path d="M2 2h5v6H2zM15 8h7v7h-7z" fill="#a8f060"/><path d="M7 8h8v7H7zM22 15h6v6h-6z" fill="#88d818"/><path d="M2 15h5v7H2zM7 22h5v6H7z" fill="#087808"/><path d="M10 16h7v6h-7zM15 23h7v5h-7z" fill="#0c400c"/><path d="M23 22h5v6h-5z" fill="#50f8b0"/></svg>
            </div>
          </div>
          <footer>Input<b>+</b></footer>
        </div>
        <div class="group">
          <div class="cells short">
            <div class="col">
              <svg viewBox="0 0 30 30"><path d="M17 5Q14 12 9 18M17 5Q22 13 22 20" fill="none" stroke="#70401c" stroke-width="2"/><path d="M6 8Q9 1 19 2Q17 11 6 10Z" fill="#4cab28" stroke="#286410"/><circle cx="8" cy="20" r="6" fill="#e01010"/><circle cx="21" cy="23" r="6" fill="#e01010"/><circle cx="6" cy="18" r="1.500" fill="#ffb0a0"/><circle cx="19" cy="21" r="1.500" fill="#ffb0a0"/></svg>
              <svg viewBox="0 0 30 30"><rect x="1" y="1" width="28" height="28" rx="2" fill="#bbb" stroke="#111" stroke-width="2"/><path d="M2 26H28V29H2Z"/><path d="M15 26V14M15 19L7 12M15 17L23 11M15 14L11 7M15 14L19 6M9 14L4 13M21 13L26 14" stroke="#111" stroke-width="2"/><path d="M5 9q5-7 10-4q8-4 11 5" fill="none" stroke="#333" stroke-width="4" stroke-dasharray="2 1"/></svg>
            </div>
            <div class="col">
              <svg viewBox="0 0 30 30"><path d="M2 10H14V4L28 15L14 26V20H2L5 15Z" fill="#444" stroke="#111"/></svg>
              <svg viewBox="0 0 30 30"><path d="M2 10H14V4L28 15L14 26V20H2L5 15Z" fill="#e2e2e2" stroke="#888" stroke-width="1.500"/></svg>
            </div>
            <div class="col">
              <svg viewBox="0 0 30 30"><ellipse cx="12" cy="12" rx="8" ry="10" fill="url(#ball)" stroke="#666" transform="rotate(35 12 12)"/><ellipse cx="20" cy="18" rx="7" ry="9" fill="#e03a88" stroke="#901050" transform="rotate(25 20 18)"/><circle cx="11" cy="13" r="3" fill="#333"/><circle cx="17" cy="17" r="3" fill="#901050"/></svg>
              <svg viewBox="0 0 30 30"><path d="M12 3H18V12L25 25Q15 31 5 25L12 12Z" fill="#f0f0f0" stroke="#777"/><path d="M9 17H21L25 25Q15 30 5 25Z" fill="#d8347c"/></svg>
            </div>
          </div>
          <footer>Util<b>+</b></footer>
        </div>
      </div>

      <div class="gh-bar">
        <button aria-label="Open"><svg viewBox="0 0 28 28"><path d="M4 2H12L14 5H23V14H4Z" fill="#eee" stroke="#888"/><path d="M1 12H14L17 9H25V26H3Z" fill="#55b030" stroke="#2c7a10"/><path d="M3 20H25" stroke="#a8e088"/></svg></button>
        <button aria-label="Save"><svg viewBox="0 0 28 28"><path d="M2 1H24L27 4V27H4L1 24V1Z" fill="#1f60d4" stroke="#0c2a70" stroke-width="1.500"/><path d="M6 2H22V13H6Z" fill="#eee"/><path d="M8 17H21V26H8Z" fill="#aaa"/><path d="M9 19h4v6H9z" fill="#1040a0"/></svg></button>
        <i class="vsep"></i>
        <label class="zoom" aria-label="Zoom"><select><option>125%</option></select><svg width="12" height="8"><path d="M1 1L6 6L11 1" fill="none" stroke="#333"/></svg></label>
        <button aria-label="Zoom extents"><svg viewBox="0 0 28 28"><path d="M2 10V2H10M18 2H26V10M26 18V26H18M10 26H2V18" fill="none" stroke="#222" stroke-width="4"/><path d="M11 11L17 17M17 11L11 17" stroke="#222" stroke-width="2.500"/></svg></button><em>▾</em>
        <button aria-label="Preview"><svg viewBox="0 0 28 28"><path d="M1 15Q14-1 27 15Q14 27 1 15Z" fill="#f4f8ff" stroke="#444" stroke-width="1.800"/><circle cx="14" cy="14" r="6.500" fill="#5aa8ee" stroke="#18487c"/><circle cx="14" cy="14" r="3"/><circle cx="12" cy="12" r="1.500" fill="#fff"/></svg></button><em>▾</em>
        <button aria-label="Sketch"><svg viewBox="0 0 28 28"><path d="M1 9Q9 8 5 16Q-1 24 12 24" fill="none" stroke="#5a2010" stroke-width="2"/><path d="M10 25L13 15L25 2Q29 10 20 20Z" fill="#e23222" stroke="#c05040"/><path d="M10 25L13 16L18 21Z" fill="#f8b838" stroke="#442200"/></svg></button>
        <i class="grow"></i>
        <button aria-label="No preview"><svg viewBox="0 0 28 28"><path d="M5 6L14 1L24 5V12L17 15H6Z" fill="#d8d8d8" stroke="#888"/><ellipse cx="16" cy="6" rx="7" ry="4" fill="#c0c0c0" stroke="#999"/><path d="M3 20Q14 14 25 20Q22 27 14 27T3 20Z" fill="#333"/></svg></button>
        <button aria-label="Wireframe"><svg viewBox="0 0 28 28" fill="#f2f2f2" stroke="#555" stroke-width="1.500"><use href="#tube-lines"/></svg></button>
        <button class="active" aria-label="Shaded"><svg viewBox="0 0 28 28" fill="#c01a12" stroke="#6a0804" stroke-width="1.200"><use href="#tube"/></svg></button>
        <i class="vsep wide"></i>
        <button aria-label="Selected only"><svg viewBox="0 0 28 28" fill="#10a0a0" stroke="#064c50" stroke-width="1.200"><use href="#tube"/><path d="M2 2Q11 6 7 14T25 27" fill="none" stroke="#333"/></svg></button>
        <button aria-label="Clipping"><svg viewBox="0 0 28 28" fill="#55a51c" stroke="#265c08" stroke-width="1.200"><use href="#tube"/><path d="M2 13L16 26Q4 28 2 13Z" fill="#ddd" stroke="#888"/><path d="M2 4L25 26" stroke="#111"/></svg></button>
        <button aria-label="Colours"><svg viewBox="0 0 28 28"><circle cx="14" cy="14" r="12" fill="#ddd" stroke="#666"/><path d="M14 2A12 12 0 0 0 14 26Z" fill="#e87a10"/><path d="M14 2V26" stroke="#60300a" stroke-width="2"/></svg></button>
        <i class="vsep tight"></i>
        <button aria-label="Mesh quality"><svg viewBox="0 0 28 28"><path d="M9 4L18 3L25 9V18L19 25L9 24L3 18V10Z" fill="#7ab4f4" stroke="#1c3c90" stroke-width="1.800"/><path d="M9 5L18 5L15 12L5 13Z" fill="#cfe4ff" opacity=".7"/></svg></button><em>▾</em>
      </div>

      <div class="canvas">
        <div class="area pink"></div>
        <div class="area violet"></div>
        <div class="area lilac one"></div>
        <div class="area lilac two"></div>
        <svg class="layer"><defs><pattern id="cgrid" x="102" y="-1" width="187.500" height="62.500" patternUnits="userSpaceOnUse"><path d="M.5 0V63M0 .5H188" stroke="#000" stroke-opacity=".1" fill="none"/></pattern></defs><rect width="100%" height="100%" fill="url(#cgrid)"/></svg>
        <div class="tag down t1">Outter Radius</div>
        <div class="tag down t2">Inner Radius</div>
        <div class="tag up t3">We shift both lists by 1 to create a new connection for each Sector</div>

        <svg class="layer">
          <defs>
            <!-- list wires, drawn twice with a small offset -->
            <g id="rise">
              <path d="M1607 461C1715 461 1595 289 1703 289"/>
              <path d="M1607 461C1740 455 1785 370 1814 313C1830 275 1840 258 1852 234"/>
              <path d="M1607 461H1912"/>
              <path d="M1793 314H1912"/>
              <path d="M1604 765C1740 762 1790 720 1810 635C1828 560 1832 500 1838 450C1845 390 1850 350 1862 325C1875 295 1885 275 1912 251"/>
              <path d="M1604 765C1730 762 1780 740 1820 700C1850 672 1880 662 1912 643"/>
              <path d="M1604 765H1912"/>
            </g>
            <g id="fall">
              <path d="M1607 461C1700 463 1770 490 1830 523C1860 540 1885 552 1912 563"/>
              <path d="M1607 461C1700 463 1770 490 1830 523C1860 542 1885 565 1912 594"/>
              <path d="M1793 314C1840 314 1880 325 1910 378"/>
              <path d="M1604 765C1720 768 1830 800 1912 864"/>
              <path d="M1604 765C1660 765 1680 800 1672 840C1665 890 1648 920 1650 965"/>
            </g>
          </defs>
          <g transform="translate(-1032 -243)">
            <g class="wire thin"><use href="#rise" x="-2" y="-2"/><use href="#rise" x="2" y="2"/><use href="#fall" x="2" y="-2"/><use href="#fall" x="-2" y="2"/></g>
            <g class="wire">
              <path d="M1203 475L1317 474"/><path d="M1404 461H1520"/><path d="M1203 779L1315 778"/><path d="M1400 765H1519"/>
              <path d="M1472 630C1566 630 1430 486 1519 486"/><path d="M1472 630C1566 630 1425 790 1518 790"/>
              <path d="M1617 629C1740 626 1800 545 1820 518C1855 475 1880 445 1912 413"/>
              <path d="M1617 629C1720 627 1780 595 1862 550C1880 540 1895 533 1912 523"/>
              <path d="M1617 629C1740 632 1790 690 1817 755C1840 815 1850 850 1860 885C1875 920 1885 940 1903 965"/>
              <path d="M1617 629C1720 632 1780 655 1829 695C1860 722 1880 735 1912 751"/>
              <path d="M1555 962C1700 960 1800 955 1912 951"/>
            </g>
            <g class="grips">
              <circle cx="1129" cy="475" r="5"/><circle cx="1200" cy="475" r="5"/><circle cx="1319" cy="449" r="5"/><circle cx="1319" cy="474" r="5"/><circle cx="1401" cy="461" r="5"/>
              <circle cx="1522" cy="461" r="5"/><circle cx="1522" cy="486" r="5"/><circle cx="1522" cy="511" r="5"/><circle cx="1603" cy="461" r="5"/><circle cx="1603" cy="486" r="5"/><circle cx="1603" cy="511" r="5"/>
              <circle cx="1469" cy="630" r="5"/><circle cx="1553" cy="629" r="5"/><circle cx="1614" cy="629" r="5"/>
              <circle cx="1705" cy="289" r="5"/><circle cx="1705" cy="314" r="5"/><circle cx="1705" cy="339" r="5"/><circle cx="1788" cy="314" r="5"/>
              <circle cx="1129" cy="779" r="5"/><circle cx="1200" cy="779" r="5"/><circle cx="1317" cy="753" r="5"/><circle cx="1317" cy="778" r="5"/><circle cx="1398" cy="765" r="5"/>
              <circle cx="1520" cy="765" r="5"/><circle cx="1520" cy="790" r="5"/><circle cx="1520" cy="815" r="5"/><circle cx="1602" cy="765" r="5"/><circle cx="1602" cy="790" r="5"/><circle cx="1602" cy="815" r="5"/>
              <circle cx="1129" cy="961" r="5"/><circle cx="1401" cy="961" r="5"/>
            </g>
          </g>
        </svg>

        <div class="panel p1"><b>mm</b><span>2000</span></div>
        <div class="panel p2"><b>mm</b><span>1300</span></div>
        <div class="panel p3"><span>1000</span></div>
        <div class="panel p4"><b>Mesh Density (mm): In this case, more poi...</b></div>
        <div class="node circle n1"><div><span>P</span><span>R</span></div><svg width="24" height="24"><use href="#clock"/></svg><div><span>C</span></div></div>
        <div class="node circle n2"><div><span>P</span><span>R</span></div><svg width="24" height="24"><use href="#clock"/></svg><div><span>C</span></div></div>
        <div class="node light n3"><div><span>C</span><span>N</span><span>K</span></div><svg width="24" height="24"><use href="#divide"/></svg><div><span>P</span><span>T</span><span>t</span></div></div>
        <div class="node light n4"><div><span>C</span><span>N</span><span>K</span></div><svg width="24" height="24"><use href="#divide"/></svg><div><span>P</span><span>T</span><span>t</span></div></div>
        <div class="node n5"><div><span>L</span><span>S</span><span>W</span></div><svg width="24" height="24" viewBox="0 0 24 24"><path d="M2 6H18M14 1L20 6L14 11" fill="none" stroke="#000" stroke-width="2.500"/><rect x="1" y="13" width="22" height="8" fill="#70d018" stroke="#4a9a10"/><path d="M2 15H22" stroke="#c0f078"/></svg><div><span>L</span></div></div>
        <div class="slider"><label for="parts">Dividing Circles equal parts</label><div class="track"><input id="parts" type="range" min="10" max="20" value="11"><output for="parts">12</output></div></div>
        <div class="edge-box"></div>

        <svg class="layer">
          <g transform="translate(-1032 -243)">
            <g fill="none" stroke="#f00" stroke-width="2"><path d="M1175 502L1206 468M1181 485Q1188 479 1195 482V489Q1188 495 1182 489Z"/><path d="M1167 805Q1190 775 1211 768M1178 788Q1185 778 1191 785Q1193 792 1186 795Q1178 796 1180 785"/></g>
            <circle cx="1842" cy="893" r="25" fill="url(#ball)" stroke="#000" stroke-width="5"/>
            <circle cx="1842" cy="893" r="22" fill="none" stroke="#fff" stroke-width="2"/>
            <path d="M1838 854L1843 861L1838 868L1833 861Z"/><path d="M1838 871L1842 880L1846 871ZM1838 915L1842 906L1846 915ZM1820 889L1829 893L1820 897ZM1864 889L1855 893L1864 897Z" fill="#fff"/>
          </g>
        </svg>
      </div>

      <footer class="gh-status"><svg width="20" height="20" viewBox="0 0 20 20"><circle cx="10" cy="10" r="9.500" fill="#123a8c"/><circle cx="10" cy="10" r="7" fill="#1c7cc0"/><path d="M8 4V11M12 4V11M8 14V16M12 14V16" stroke="#fff" stroke-width="2"/></svg><span>Solution completed in ~8.2 seconds (17 seconds ago)</span><small>1.0.0007</small></footer>
    </section>
  </main>
</body>
</html>
```

FILE: styles.css
```css
* {
  box-sizing: border-box;
  margin: 0; padding: 0;
}

body {
  height: 100vh;
  overflow: hidden;
  font-family: "Open Sans", "Noto Sans", sans-serif;
  font-size: 14px;
  background: #d9dbe3;
}

a { color: inherit; text-decoration: none; }
button { font: inherit; color: inherit; border: 0; background: none; }
svg { display: block; flex: none; }
.defs { position: absolute; }

.desktop {
  display: grid;
  grid-template-columns: 1030fr 876fr;
  height: 100vh;
}

/* ---------- Rhino ---------- */
.rhino {
  display: flex;
  flex-direction: column;
  min-width: 0;
  margin-bottom: 5px;
  background: #555;
  color: #7b7b7b;
  border-right: 2px solid #4a4a4e;
  box-shadow: 0 1px 4px #555;
  overflow: hidden;
}

.menu {
  display: flex;
  justify-content: space-between;
  height: 24px;
  padding: 0 56px 0 6px;
  line-height: 24px;
  background: #fff;
  color: #6d6d6d;
  white-space: nowrap;
}

.toolbars {
  height: 71px;
  padding: 4px 0 0 8px;
  border-bottom: 1px solid #808080;
}

.tabstrip {
  display: flex;
  height: 24px;
  line-height: 24px;
  white-space: nowrap;
}

.tabs {
  flex: 1;
  display: flex;
  justify-content: space-between;
  padding-left: 15px;
  border-bottom: 1px solid #b4bcd8;
}

.tab-on { display: flex; }
.tab-on span {
  width: 98px;
  padding-left: 8px;
  border-top: 1px solid #b4bcd8;
  border-right: 1px solid #b4bcd8;
  border-radius: 0 3px 0 0;
}

.tab-end {
  display: flex;
  align-items: center;
  gap: 4px;
  width: 32px;
  padding-left: 3px;
  line-height: 20px;
  border: solid #b4bcd8;
  border-width: 1px 0 1px 1px;
  color: #aaa;
}

.icons {
  display: flex;
  align-items: center;
  height: 32px;
}
.icons svg { width: 28px; height: 22px; }
.icons .sep, .enscape-icons .sep {
  width: 7px;
  height: 24px;
  border-left: 1px solid #6e6e6e;
}
.more { color: #aaa; }
.icons .more { margin-left: auto; padding-right: 12px; }
.icons text, .panel-tabs text, .panel-tools text { font-family: "Liberation Sans", sans-serif; }

.filters {
  display: flex;
  height: 69px;
  border-bottom: 1px solid #808080;
}

.filter-grid {
  display: grid;
  grid-template-columns: repeat(6, 117px);
  grid-auto-rows: 23px;
  flex: 1;
  margin-left: 4px;
  padding: 6px 0 0 7px;
  white-space: nowrap;
}

label { display: flex; align-items: center; gap: 5px; }

input[type=checkbox] {
  appearance: none;
  width: 15px;
  height: 15px;
  border: 1px solid #333;
  background: #fff;
}
input[type=checkbox]:checked::after {
  content: "";
  display: block;
  width: 9px;
  height: 5px;
  margin: 3px 0 0 2px;
  border: solid #222;
  border-width: 0 0 1px 1px;
  transform: rotate(-48deg);
}

.filters > .more { padding: 26px 10px 0 0; }

.enscape {
  width: 193px;
  margin-top: 3px;
  border-left: 4px double #a0a6b8;
}
.enscape-tabs { display: flex; justify-content: space-between; height: 24px; border-bottom: 1px solid #b4bcd8; }
.enscape-tabs a {
  width: 86px;
  padding-left: 15px;
  line-height: 24px;
  border: solid #b4bcd8;
  border-width: 1px 1px 0 0;
  border-radius: 6px 3px 0 0;
}
.enscape-icons { display: flex; align-items: center; height: 32px; padding-left: 1px; }
.enscape-icons svg { width: 28px; height: 22px; }
.enscape-icons .more { margin-left: auto; padding-right: 18px; }

.command {
  display: grid;
  grid-template-columns: auto 1fr 21px;
  grid-template-rows: 94px 25px;
  height: 122px;
  margin: 0 0 0 9px;
  font-family: "Liberation Sans", sans-serif;
  font-size: 15px;
  color: #fff;
}
.history {
  grid-column: 1 / 3;
  border-bottom: 1px solid #b4bcd8;
  line-height: 19px;
}
.vscroll {
  display: flex;
  flex-direction: column;
  justify-content: space-between;
  align-items: center;
  margin-top: 3px;
  padding: 6px 0;
  background: #f0f0f0;
}
.vscroll i { width: 19px; height: 21px; margin-top: 30px; background: #cdcdcd; }
.prompt { font-weight: bold; line-height: 21px; align-items: flex-start; }
#cmd { background: none; border: 0; color: #fff; min-width: 0; }
.spin { display: flex; flex-direction: column; padding: 1px; background: #eee; height: 22px; }
.spin button {
  flex: 1;
  display: flex;
  align-items: center;
  justify-content: center;
  border: 1px solid #888;
  background: #f6f6f6;
}

.work { flex: 1; display: flex; min-height: 0; }

.layers {
  display: flex;
  flex-direction: column;
  width: 413px;
  margin-right: 2px;
}
.layers h2 {
  display: flex;
  align-items: center;
  gap: 5px;
  height: 29px;
  padding-left: 5px;
  font-size: 14px;
  font-weight: normal;
  color: #6e6e6e;
}
.layers h2::after { content: ""; flex: 1; height: 3px; border: solid #9aa0b4; border-width: 1px 0; }

.panel-tabs { display: flex; align-items: center; height: 26px; }
.panel-tabs a {
  display: flex;
  justify-content: center;
  align-items: center;
  width: 44px;
  height: 28px;
}
.panel-tabs .on { border: 1px solid #b4bcd8; border-bottom: 0; }
.panel-tabs a svg { width: 20px; height: 20px; }
.panel-gear { width: 18px; height: 18px; margin-left: auto; }

.panel-body {
  flex: 1;
  display: flex;
  flex-direction: column;
  min-height: 0;
  margin: 0 1px 3px 1px;
  border: 1px solid #b4bcd8;
}
.panel-tools {
  display: flex;
  align-items: center;
  height: 46px;
  padding-left: 6px;
  border-bottom: 1px solid #b4bcd8;
}
.panel-tools svg { width: 26px; height: 20px; }

.list {
  flex: 1;
  display: flex;
  flex-direction: column;
  justify-content: space-between;
  min-height: 0;
  margin-right: 4px;
  background: #fff;
  overflow: hidden;
}
table { width: 100%; border-collapse: collapse; table-layout: fixed; color: #777; }
th { width: 21px; height: 26px; font-weight: normal; text-align: left; border-left: 1px solid #808080; }
th.name { width: auto; padding-left: 5px; border: 0; }
th.mat { width: 80px; padding-left: 5px; }
th.lin { width: 20px; padding-left: 5px; overflow: hidden; }
td { height: 24px; overflow: hidden; border-bottom: 1px solid #ececec; }
td:first-child { padding-left: 9px; }
td:nth-child(6) { padding-left: 5px; }
td:last-child { padding-left: 4px; }
td svg { margin: 0 auto; }
.current { font-weight: bold; }
.sw { display: block; width: 14px; height: 14px; margin: 0 auto; border: 1px solid #777; background: #fff; }
.sw.black { background: #000; }
.sw.red { background: #d00000; }
.sw.purple { background: #7c20d0; }
.sw.blue { background: #00f; }
.sw.green { background: #0e7f0e; }
.dot { display: block; width: 16px; height: 16px; border-radius: 50%; background: #f7f7f7; }

.hscroll { display: flex; height: 19px; background: #f0f0f0; }
.hscroll button { display: flex; align-items: center; justify-content: center; width: 21px; }
.hscroll div { flex: 1; }
.hscroll i { display: block; width: 71%; height: 19px; background: #cdcdcd; }

.side-tools {
  display: flex;
  flex-direction: column;
  align-items: center;
  width: 34px;
  margin-top: 5px;
  border-left: 1px solid #808080;
}
.side-tools::before { content: ""; width: 26px; height: 3px; margin: 2px 0 4px; border: solid #9aa0b4; border-width: 1px 0; }
.side-tools svg { width: 22px; height: 22px; margin: 3px 0; }

.view { flex: 1; display: flex; flex-direction: column; min-width: 0; margin: 2px 2px 0 4px; }
.viewport {
  flex: 1;
  position: relative;
  min-height: 0;
  border-top: 1px solid #b4bcd8;
  border-bottom: 1px solid #b4bcd8;
}
.scene { width: 100%; height: 100%; }
.axis { font-size: 15px; fill: #666; }
.view-title {
  position: absolute;
  top: 0; left: 0;
  display: flex;
  align-items: center;
  height: 23px;
  border-radius: 0 0 3px 0;
  background: #88a0f0;
  color: #777;
}
.view-title b { padding: 0 9px; }
.view-title i { width: 14px; border-left: 1px solid #777; font-style: normal; line-height: 20px; }

.view-tabs { display: flex; gap: 21px; height: 27px; line-height: 28px; }
.view-tabs .on {
  width: 47px;
  height: 26px;
  margin-right: -6px;
  padding-left: 3px;
  text-align: center;
  border: 1px solid #b4bcd8;
  border-top: 0;
  border-radius: 0 0 3px 10px;
}
.view-tabs a + a { min-width: 26px; }
.view-tabs button { color: #fff; font-size: 18px; font-weight: bold; }

.osnap {
  display: flex;
  align-items: center;
  gap: 8px;
  height: 37px;
  margin-left: 3px;
  padding-left: 4px;
  border-left: 4px double #9aa0b4;
  white-space: nowrap;
}
.project input { border: 3px solid #d0daf2; background: #999; outline: 1px solid #1c64b4; }
.disable { margin-left: 8px; }
.disable input { background: #ddd; border-color: #aaa; }

.status {
  display: flex;
  height: 22px;
  border-top: 1px solid #b4bcd8;
  line-height: 22px;
  white-space: nowrap;
}
.status > * { overflow: hidden; border-right: 1px solid #b4bcd8; text-align: center; }
.status .on { background: #d0daf2; color: #666; font-weight: bold; border-right: 2px solid #555; text-align: left; }
.c1 { width: 49px; }
.c2 { width: 83px; }
.c3 { flex: 1; display: flex; align-items: center; gap: 4px; padding-left: 4px; }
.c3 .sw { margin: 0; }
.s1 { width: 66px; }
.s2 { width: 44px; }
.s3 { width: 48px; }
.s4 { width: 75px; }
.s5 { width: 55px; }
.s6 { width: 94px; }
.s7 { width: 40px; margin-right: 20px; }

/* ---------- Grasshopper ---------- */
.gh {
  display: flex;
  flex-direction: column;
  min-width: 0;
  border-left: 2px solid #808080;
  background: #f0f0f0;
  color: #111;
  overflow: hidden;
}

.gh-menu {
  display: flex;
  gap: 22px;
  height: 33px;
  padding: 0 8px 0 14px;
  line-height: 33px;
  background: #fafafa;
  white-space: nowrap;
}
.gh-menu span { margin-left: auto; }

.gh-tabs {
  display: flex;
  height: 29px;
  line-height: 31px;
  font-family: "Liberation Sans", sans-serif;
  color: #6c6c6c;
  border-bottom: 1px solid #a0a0a0;
}
.gh-tabs a { width: 35px; flex: none; text-align: center; }
.gh-tabs .on {
  width: 34px;
  height: 29px;
  line-height: 26px;
  color: #111;
  background: linear-gradient(#fff, #dedede);
  border: 1px solid #999;
  border-bottom: 0;
  border-radius: 6px 6px 0 0;
}

.ribbon {
  display: flex;
  align-items: flex-start;
  gap: 4px;
  height: 142px;
  padding: 2px 3px;
  background: linear-gradient(#d6d6d6, #f0f0f0);
  border-bottom: 2px solid #777;
}
.group {
  border: 1px solid #8a8a8a;
  border-radius: 5px;
  background: linear-gradient(#dadada, #f2f2f2);
  overflow: hidden;
}
.cells { display: flex; height: 107px; padding-top: 2px; }
.cells.short { height: 72px; }
.col {
  display: grid;
  grid-template-columns: 35px;
  grid-auto-rows: 35px;
  padding: 0 5px 0 1px;
}
.col + .col { padding: 0 6px; border-left: 1px solid #c6c6c6; }
.col.two { grid-template-columns: 35px 35px; }
.cells .col:last-child { padding-right: 1px; }
.col svg { width: 31px; height: 31px; margin: 0 2px; }
.glyph { font-family: "Liberation Serif", serif; font-size: 22px; font-weight: bold; fill: #fff; }
.glyph.sans { font-family: "Liberation Sans", sans-serif; }
.glyph.small { font-size: 16px; }
.glyph.dim { fill: #666; }
.glyph.digit { fill: #222; }
.group footer {
  position: relative;
  height: 18px;
  padding-right: 14px;
  line-height: 17px;
  text-align: center;
  font-family: "Liberation Sans", sans-serif;
  font-size: 12px;
  background: #1e1e1e;
  color: #fff;
}
.group footer b { position: absolute; right: 3px; top: 0; color: #999; font-size: 14px; }

.gh-bar {
  display: flex;
  align-items: center;
  height: 39px;
  background: linear-gradient(#fff, #f2f2f4);
  border-bottom: 1px solid #b8b8b8;
}
.gh-bar button {
  display: flex;
  align-items: center;
  justify-content: center;
  width: 34px;
  height: 34px;
}
.gh-bar button:nth-child(2) { margin-left: 3px; }
.gh-bar button svg { width: 28px; height: 28px; }
.gh-bar .active { border: 1px solid #0a74d8; }
.vsep { width: 1px; height: 27px; margin: 0 5px; background: #c4c4c4; }
.vsep.wide { margin: 0 7px; }
.vsep.tight { margin: 0 2px; }
.grow { flex: 1; }
.gh-bar em { width: 17px; font-style: normal; font-size: 10px; text-align: center; }
.gh-bar em:last-child { width: 9px; }
.zoom {
  width: 180px;
  height: 28px;
  margin-right: 3px;
  padding-right: 5px;
  border: 1px solid #7a7a7a;
  background: #fff;
}
.zoom select {
  flex: 1;
  appearance: none;
  border: 0;
  padding-left: 3px;
  background: none;
  font: inherit;
}

.canvas {
  flex: 1;
  position: relative;
  min-height: 0;
  background: #d4d0c8;
  overflow: hidden;
  font-size: 13px;
}
.canvas > * { position: absolute; }
.layer { inset: 0; width: 100%; height: 100%; pointer-events: none; }

.area { border: 1px solid; }
.pink { left: 85px; top: 11px; right: -2px; bottom: -2px; background: #eda6a2; border-color: #c89c96; }
.violet { left: 661px; top: 18px; width: 122px; bottom: -2px; background: #b68dee; border-color: #8f6fc0; }
.lilac { width: 107px; height: 81px; background: #c593da; border-color: #a882c4; }
.lilac.one { left: 275px; top: 178px; }
.lilac.two { left: 272px; top: 482px; }

.tag {
  height: 22px;
  padding: 0 5px;
  line-height: 20px;
  border: 1px solid #222;
  background: linear-gradient(#fff, #dcdcdc);
  white-space: nowrap;
}
.tag::after {
  content: "";
  position: absolute;
  left: 50%;
  width: 9px;
  height: 9px;
  margin-left: -5px;
  border: solid #222;
  border-width: 0 1px 1px 0;
  background: #dcdcdc;
  transform: rotate(45deg);
}
.tag.down::after { bottom: -5px; }
.tag.up::after { top: -5px; left: 256px; border-width: 1px 0 0 1px; background: #fff; }
.t1 { left: 279px; top: 149px; }
.t2 { left: 282px; top: 453px; }
.t3 { left: 466px; top: 26px; width: 420px; }

.wire { fill: none; stroke: #000; stroke-opacity: .6; stroke-width: 3; }
.wire.thin { stroke-width: 2; }
.grips { fill: #fff; stroke: #000; stroke-width: 3; }

.panel {
  width: 71px;
  border: 1px solid #333;
  border-radius: 4px;
  background: #fffa5a;
  text-align: center;
  overflow: hidden;
}
.panel b { display: block; height: 23px; line-height: 21px; font-weight: normal; background: #cbc84a; border-bottom: 1px solid #555; }
.panel span { display: block; padding-right: 12px; line-height: 20px; font-family: "Liberation Mono", monospace; color: #333; }
.p1, .p2 { left: 97px; height: 49px; }
.p1 { top: 208px; }
.p2 { top: 512px; }
.p3 { left: 521px; top: 373px; width: 63px; height: 26px; }
.p4 { left: 97px; top: 696px; width: 273px; height: 48px; white-space: nowrap; }

.node {
  display: flex;
  align-items: center;
  justify-content: space-between;
  width: 83px;
  height: 82px;
  padding: 0 13px 0 9px;
  border: 1px solid #444;
  border-radius: 4px;
  background: linear-gradient(#d0d0d4 0, #c0c0c6 12%, #a0a0ac 13%, #94949e);
  box-shadow: 0 1px 0 #0004;
}
.node.light { background: linear-gradient(#eee, #c8c8c8); }
.node.circle { height: 56px; }
.node div { display: flex; flex-direction: column; text-align: center; }
.node span { line-height: 25px; }
.n1 { left: 287px; top: 190px; }
.n2 { left: 285px; top: 494px; }
.n3 { left: 490px; top: 203px; }
.n4 { left: 488px; top: 507px; }
.n5 { left: 673px; top: 30px; }

.slider {
  left: 104px;
  top: 374px;
  display: flex;
  width: 334px;
  height: 26px;
  border: 1px solid #333;
  border-radius: 4px;
  background: linear-gradient(#f2f2f2, #cdcdcd);
  overflow: hidden;
}
.slider label {
  flex: none;
  width: 182px;
  justify-content: center;
  white-space: nowrap;
  border-right: 1px solid #333;
  background: linear-gradient(#b8b8c0, #9090a0);
}
.track { flex: 1; display: flex; align-items: center; position: relative; min-width: 0; padding: 0 12px; }
.track input {
  flex: 1;
  min-width: 0;
  appearance: none;
  height: 7px;
  border-bottom: 1px solid #b4b4b4;
  background: repeating-linear-gradient(90deg, #b4b4b4 0 1px, transparent 1px 13px);
}
.track input::-webkit-slider-thumb {
  appearance: none;
  width: 7px;
  height: 7px;
  margin-top: 3px;
  border: 2px solid #000;
  background: #fff;
  transform: rotate(45deg);
}
.track output { position: absolute; left: 37px; background: #dfdfdf; }
.edge-box { left: 0; bottom: 0; width: 9px; height: 35px; border: 1px solid #222; background: linear-gradient(#ccc, #666); }

.gh-status {
  display: flex;
  align-items: center;
  gap: 4px;
  height: 27px;
  padding: 0 38px 0 4px;
  border-top: 1px solid #fff;
}
.gh-status small { margin-left: auto; font-size: 14px; color: #777; }
```
